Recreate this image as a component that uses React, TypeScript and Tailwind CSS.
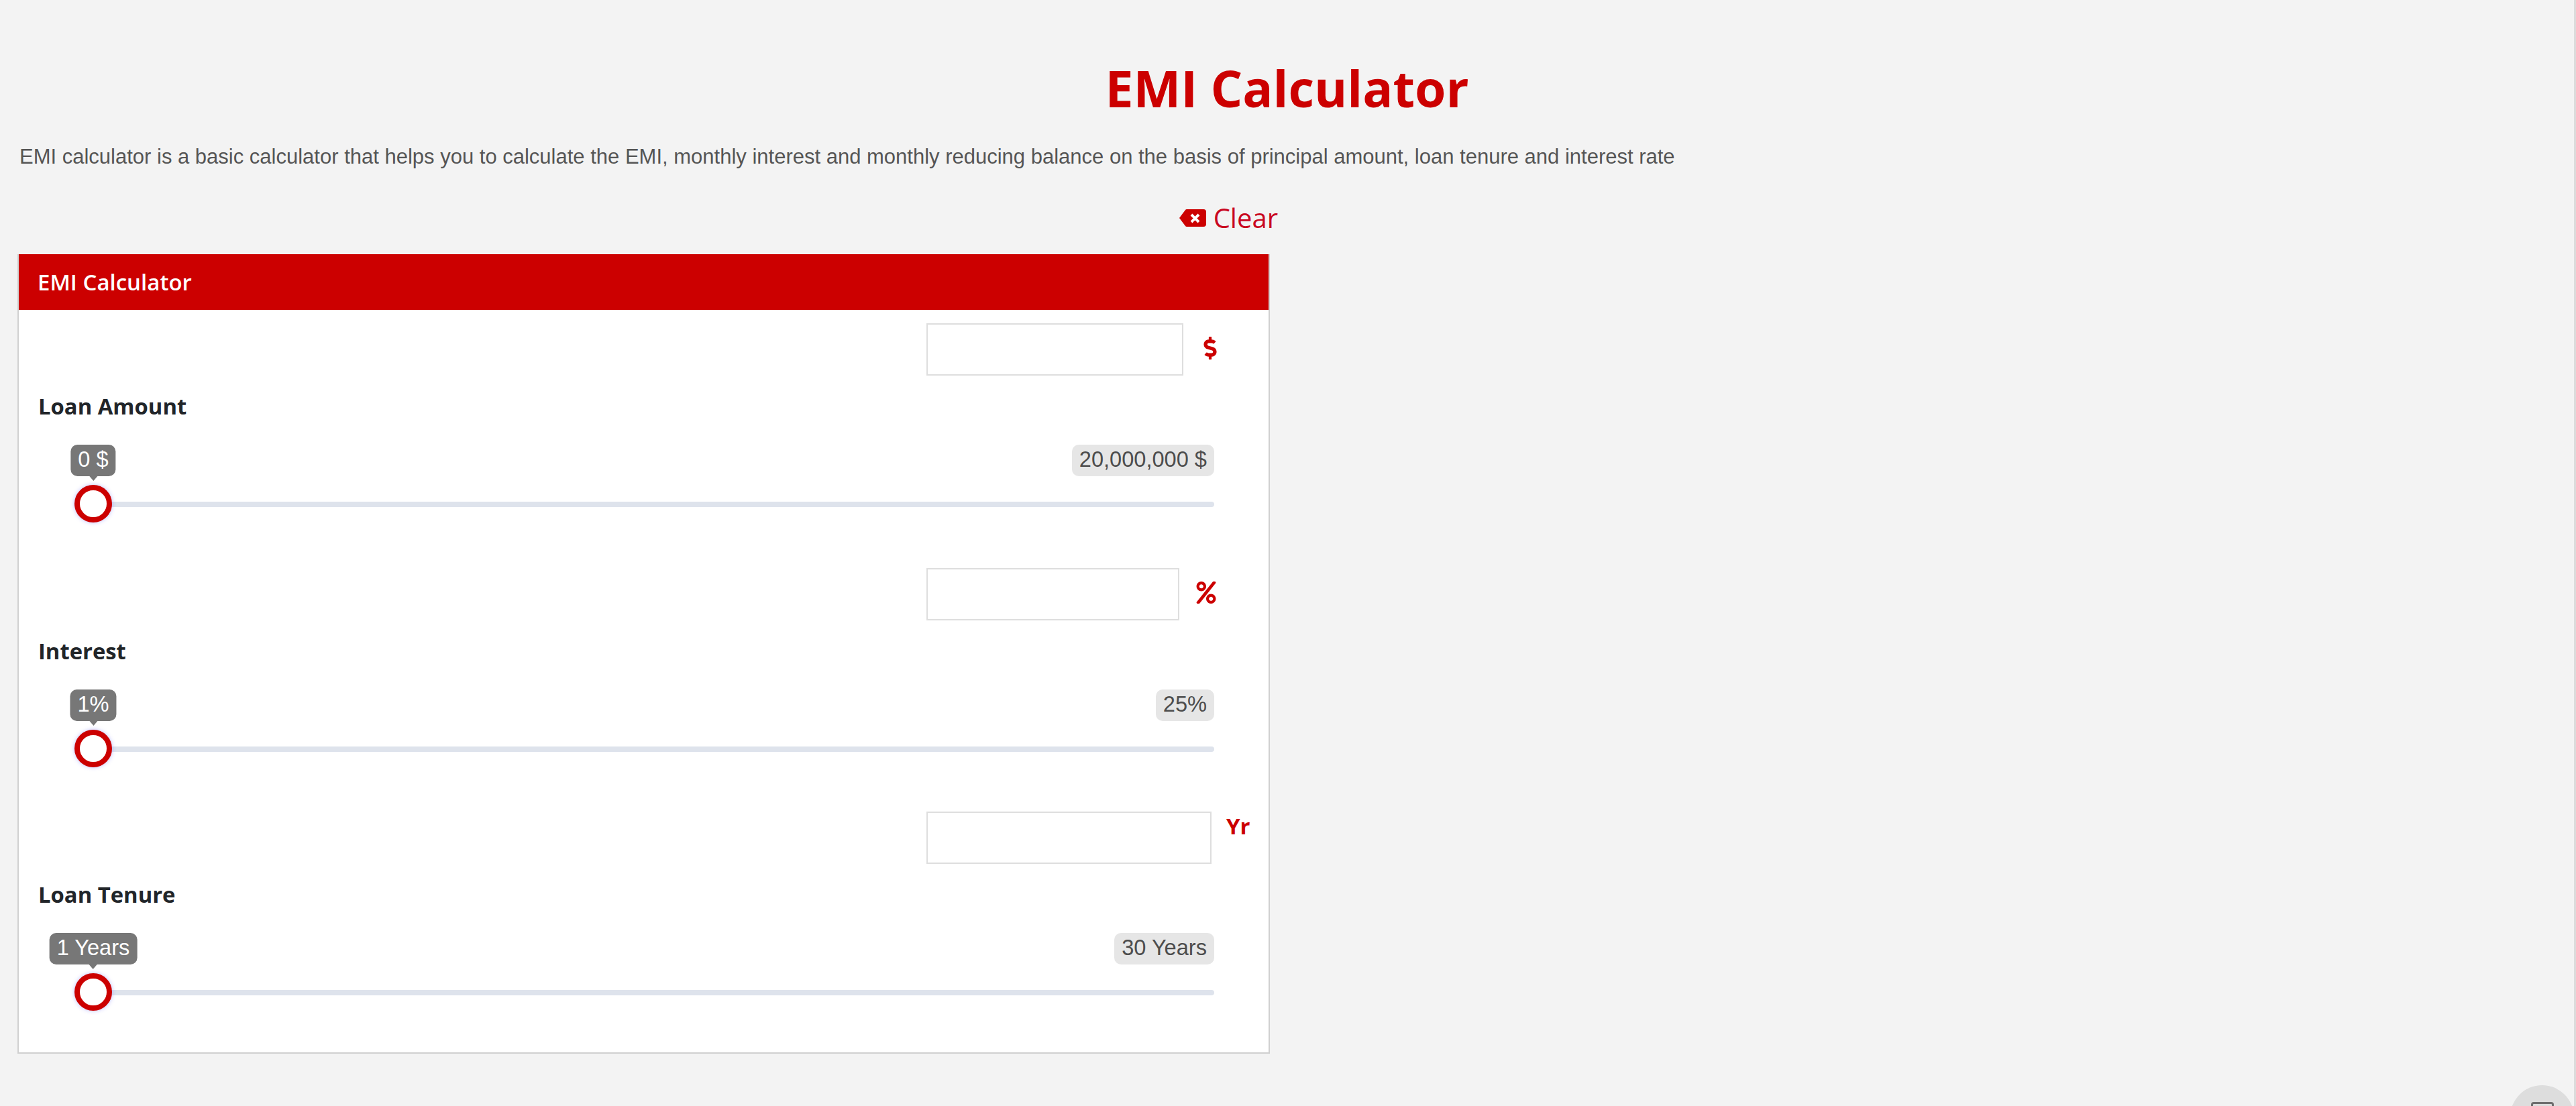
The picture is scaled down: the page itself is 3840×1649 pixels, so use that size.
import { FaDollarSign, FaPercent } from "react-icons/fa";
import type { ReactNode } from "react";

function Slider({ min, max }: { min: string; max: string }) {
  return (
    <div className="relative ml-[83px] mr-[81px]">
      <div className="flex justify-end">
        <span className="rounded-[10px] bg-[#e6e6e6] px-[11px] pb-[3px] text-[32.6px] leading-[44px] text-[#4d4d4d]">{max}</span>
      </div>
      <div className="mt-[38px] h-[8px] rounded-[4px] bg-[#dee3ec]" />
      <div className="absolute top-0 left-[28px] -translate-x-1/2">
        <div className="relative whitespace-nowrap rounded-[10px] bg-[#777777] px-[11px] pb-[3px] text-[32.6px] leading-[44px] text-white">
          {min}
          <span className="absolute top-[47px] left-1/2 -ml-[6px] h-0 w-0 border-x-[6px] border-t-[7px] border-x-transparent border-t-[#777777]" />
        </div>
      </div>
      <div className="absolute top-[60px] left-0 h-[56px] w-[56px] rounded-full border-[8px] border-[#cc0000] bg-white shadow-[0_0_6px_rgba(70,70,255,0.35)]" />
    </div>
  );
}

function Field({ label, inputWidth, gap, unit, min, max, top }: { label: string; inputWidth: string; gap: string; unit: ReactNode; min: string; max: string; top: string }) {
  return (
    <section className={top}>
      <div className={`ml-[1353px] flex ${gap}`}>
        <input type="text" className={`h-[78px] ${inputWidth} border-2 border-[#dedede] bg-white outline-none`} />
        {unit}
      </div>
      <h3 className="mt-[22px] ml-[29px] font-['Open_Sans',sans-serif] text-[32.8px] leading-[48px] font-bold text-[#212529]">{label}</h3>
      <div className="mt-[33px]">
        <Slider min={min} max={max} />
      </div>
    </section>
  );
}

export default function App() {
  return (
    <div className="relative h-[1649px] overflow-hidden border-r-[3px] border-[#dcdcdc] bg-[#f3f3f3] font-['Liberation_Sans',sans-serif]">
      <h1 className="pt-[83px] text-center font-['Open_Sans',sans-serif] text-[75px] leading-[96px] font-bold text-[#cc0000]">EMI Calculator</h1>
      <p className="mt-[32px] ml-[29px] text-[31px] leading-[46px] whitespace-nowrap text-[#555555]">
        EMI calculator is a basic calculator that helps you to calculate the EMI, monthly interest and monthly reducing balance on the basis of principal amount, loan tenure and interest rate
      </p>
      <div className="mt-[41px] flex w-[1905px] justify-end">
        <button className="flex items-center gap-[11px] font-['Open_Sans',sans-serif] text-[40px] leading-[54px] text-[#c9061f]">
          <svg viewBox="0 0 40 26" className="h-[26px] w-[40px]">
            <path d="M11 0H36a4 4 0 0 1 4 4V22a4 4 0 0 1-4 4H11a3 3 0 0 1-2-1L0 13 9 1a3 3 0 0 1 2-1Z" fill="#cc0000" />
            <path d="M18 8l11 11M29 8L18 19" stroke="#fff" strokeWidth="4" />
          </svg>
          Clear
        </button>
      </div>
      <div className="mt-[27px] ml-[26px] w-[1867px] border-2 border-t-0 border-[#d0d0d0] bg-white pb-[85px]">
        <div className="h-[83px] bg-[#cc0000] pl-[28px] font-['Open_Sans',sans-serif] text-[33px] leading-[83px] font-semibold text-white">EMI Calculator</div>
        <Field
          top="mt-[20px]"
          label="Loan Amount"
          inputWidth="w-[383px]"
          gap="gap-[30px]"
          unit={<FaDollarSign className="mt-[20px] h-[34px] w-[20px] text-[#cc0000]" />}
          min="0 $"
          max="20,000,000 $"
        />
        <Field
          top="mt-[91px]"
          label="Interest"
          inputWidth="w-[377px]"
          gap="gap-[25px]"
          unit={<FaPercent className="mt-[20px] h-[33px] w-[30px] text-[#cc0000]" />}
          min="1%"
          max="25%"
        />
        <Field
          top="mt-[89px]"
          label="Loan Tenure"
          inputWidth="w-[425px]"
          gap="gap-[22px]"
          unit={<span className="font-['Open_Sans',sans-serif] text-[33px] leading-[44px] font-bold text-[#cc0000]">Yr</span>}
          min="1 Years"
          max="30 Years"
        />
      </div>
      <div className="absolute top-[1618px] right-0 flex h-[95px] w-[95px] justify-center rounded-full bg-[#dddddd]">
        <div className="mt-[25px] h-[30px] w-[34px] rounded-[4px] border-[3px] border-[#6e6e6e]" />
      </div>
    </div>
  );
}
